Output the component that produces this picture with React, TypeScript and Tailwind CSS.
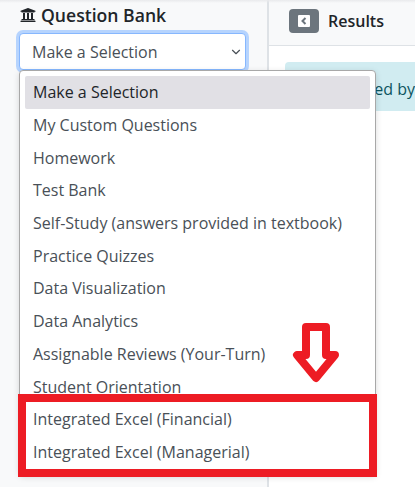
import { ChevronDown } from 'lucide-react';
import { FaUniversity } from 'react-icons/fa';

const options = [
  'Make a Selection',
  'My Custom Questions',
  'Homework',
  'Test Bank',
  'Self-Study (answers provided in textbook)',
  'Practice Quizzes',
  'Data Visualization',
  'Data Analytics',
  'Assignable Reviews (Your-Turn)',
  'Student Orientation',
  'Integrated Excel (Financial)',
  'Integrated Excel (Managerial)',
];

export default function App() {
  return (
    <div className="relative flex h-[487px] w-[415px] overflow-hidden bg-white font-['Open_Sans',sans-serif] text-[16px]">
      {/* Top edge shadow */}
      <div className="absolute inset-x-0 top-0 h-[3px] bg-gradient-to-b from-[#e9eaec] to-transparent" />

      {/* Left panel */}
      <aside className="w-[269px] shrink-0 border-r-2 border-[#dee2e6] bg-[#f8f9fa] pl-[19px] pr-[21px] pt-[3px]">
        <h2 className="flex h-[24px] items-center gap-[4px] text-[17.6px] font-semibold text-[#212529]">
          <FaUniversity className="h-[16px] w-[18px]" />
          Question Bank
        </h2>
        <div className="mt-[6px] flex h-[37px] items-center justify-between rounded-[4px] border border-[#86b7fe] bg-white pl-[12px] pr-[2px] text-[#495057] shadow-[0_0_0_3px_#b6d4fe]">
          Make a Selection
          <ChevronDown className="h-[14px] w-[14px]" strokeWidth={2} />
        </div>
      </aside>

      {/* Right panel */}
      <main className="min-w-0 flex-1">
        <div className="flex h-[46px] items-center gap-[9px] border-b border-[#dee2e6] bg-[#f8f9fa] pb-[3px] pl-[20px]">
          <span className="flex h-[24px] w-[30px] items-center justify-center rounded-[4px] bg-[#6c757d]">
            <svg width="12" height="12" viewBox="0 0 12 12">
              <rect width="12" height="12" rx="1" fill="white" />
              <path d="M7.5 3L4.5 6L7.5 9" fill="none" stroke="#6c757d" strokeWidth="2" />
            </svg>
          </span>
          <span className="font-semibold text-[#212529]">Results</span>
        </div>
        <div className="ml-[16px] mt-[16px] h-[49px] rounded-l-[4px] bg-[#d1ecf1] pl-[49px] pt-[15px] whitespace-nowrap text-[#0c5460]">
          Created by
        </div>
      </main>

      {/* Open dropdown list */}
      <ul className="absolute left-[19px] top-[70px] w-[357px] rounded-[4px] border border-[#a8a8a8] bg-white px-[5px] pt-[5px] pb-[6px] text-[#495057] shadow-[0_2px_6px_rgba(0,0,0,0.15)]">
        {options.map((label, i) => (
          <li
            key={label}
            className={
              i === 0
                ? 'flex h-[32.7px] items-center rounded-[2px] bg-[#e1e0e5] pl-[8px] text-[#212529]'
                : 'flex h-[32.7px] items-center pl-[8px]'
            }
          >
            {label}
          </li>
        ))}
      </ul>

      {/* Annotation */}
      <div className="absolute left-[18px] top-[394px] h-[83px] w-[359px] border-[8px] border-[#ed1c24]" />
      <svg className="absolute left-[292px] top-[319px]" width="48" height="66" viewBox="0 0 48 66">
        <path
          d="M14 8H34V36H43L24 59L5 36H14Z"
          fill="white"
          stroke="#ed1c24"
          strokeWidth="8"
          strokeLinejoin="round"
        />
      </svg>
    </div>
  );
}
